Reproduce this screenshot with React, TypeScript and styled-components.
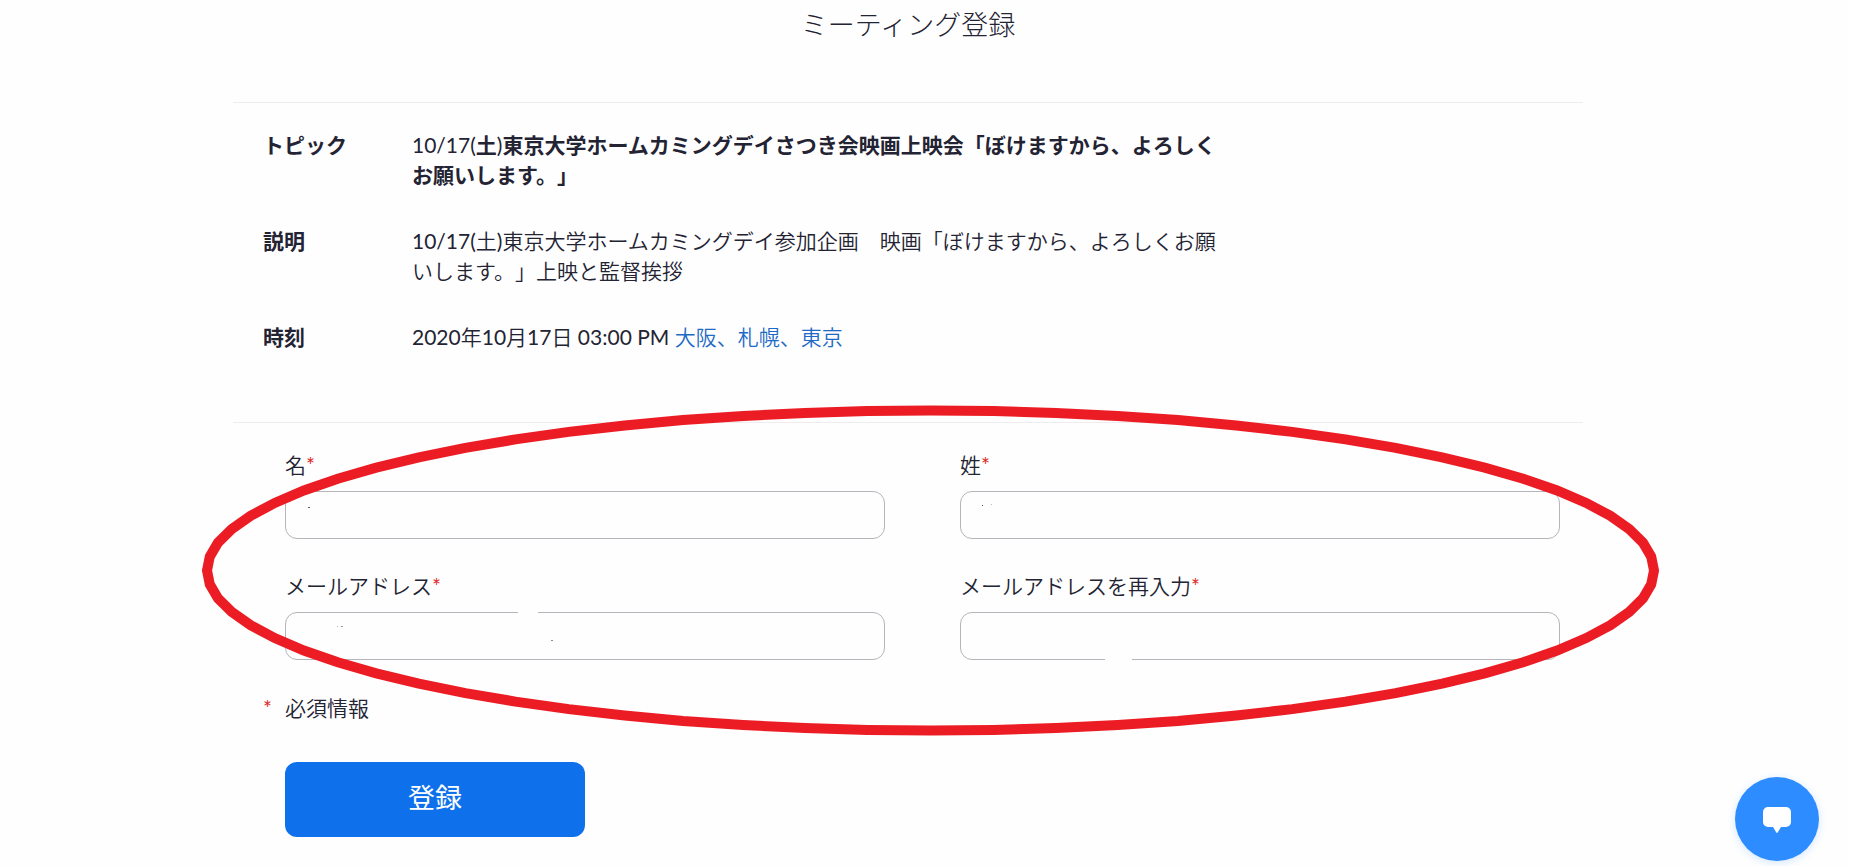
import React from "react";
import styled, { createGlobalStyle } from "styled-components";

const GlobalStyle = createGlobalStyle`
  *, *::before, *::after { box-sizing: border-box; }
  body {
    margin: 0;
    background: #fefefe;
    color: #232333;
    font-family: Lato, "Noto Sans CJK JP", sans-serif;
    font-size: 21px;
    line-height: 30px;
    text-spacing-trim: space-all;
  }
`;

const Page = styled.div`
  padding: 0 33px 24px 0;
`;

const Content = styled.main`
  max-width: 1350px;
  margin: 0 auto;
`;

const Title = styled.h1`
  margin: 0;
  padding: 5px 0 57px;
  font-size: 27px;
  line-height: 40px;
  font-weight: 300;
  text-align: center;
`;

const Details = styled.dl`
  display: flex;
  flex-direction: column;
  gap: 36px;
  margin: 0;
  padding: 27px 30px 70px;
  border-top: 1px solid #ededf0;
`;

const DetailRow = styled.div`
  display: grid;
  grid-template-columns: 149px minmax(0, 816px);
`;

const Term = styled.dt`
  font-weight: 700;
`;

const Description = styled.dd`
  margin: 0;
  font-weight: 350;
`;

const Regular = styled.span`
  font-weight: 400;
`;

const Strong = styled.strong`
  font-weight: 700;
`;

const ZoneLink = styled.a`
  color: #1f6ac6;
  text-decoration: none;
`;

const Form = styled.form`
  position: relative;
  padding: 27px 23px 0 52px;
  border-top: 1px solid #ededf0;
`;

const Fields = styled.div`
  display: grid;
  grid-template-columns: 1fr 1fr;
  gap: 32px 75px;
`;

const Field = styled.div`
  display: flex;
  flex-direction: column;
  gap: 11px;
`;

const Label = styled.label`
  font-weight: 350;
`;

const Star = styled.span`
  color: #e02828;
  font-weight: 400;
`;

const Input = styled.input`
  width: 100%;
  height: 48px;
  padding: 0 20px;
  border: 1px solid #b4b4ba;
  border-radius: 12px;
  background: #fefefe;
  color: inherit;
  font: inherit;
  outline: none;
`;

const Required = styled.p`
  display: grid;
  grid-template-columns: 22px 1fr;
  margin: 33px 0 39px -22px;
  font-weight: 350;
`;

const Submit = styled.button`
  display: block;
  width: 300px;
  height: 75px;
  padding: 0 0 4px;
  border: 0;
  border-radius: 12px;
  background: #0e71eb;
  color: #fff;
  font: inherit;
  font-size: 27px;
  cursor: pointer;
`;

const Marker = styled.svg`
  position: absolute;
  top: -23px;
  left: -33px;
  overflow: visible;
  pointer-events: none;
`;

const ChatButton = styled.button`
  position: fixed;
  right: 30px;
  bottom: 5px;
  display: flex;
  align-items: center;
  justify-content: center;
  width: 84px;
  height: 84px;
  padding: 0;
  border: 0;
  border-radius: 50%;
  background: #2d8cff;
  box-shadow: 0 2px 8px rgba(45, 140, 255, 0.2);
  cursor: pointer;
`;

const fields = [
  { id: "first-name", label: "名", type: "text" },
  { id: "last-name", label: "姓", type: "text" },
  { id: "email", label: "メールアドレス", type: "email" },
  { id: "email-confirm", label: "メールアドレスを再入力", type: "email" },
];

// The hand-drawn marker ring is a 72-sided polygon.
const ring = Array.from({ length: 72 }, (_, i) => {
  const angle = (i * Math.PI) / 36;
  return `${(730.5 + 723.5 * Math.cos(angle)).toFixed(1)},${(170.5 + 160 * Math.sin(angle)).toFixed(1)}`;
}).join(" ");

function MarkerRing() {
  return (
    <Marker width="1460" height="340" viewBox="0 0 1460 340" aria-hidden="true">
      <path d="M318 212.500h20M905 259.500h27" stroke="#fefefe" strokeWidth="3" />
      <g fill="#55555f">
        <rect x="108" y="107" width="2" height="1" />
        <rect x="782" y="105" width="1" height="1" />
        <rect x="791" y="104" width="1" height="1" opacity="0.4" />
        <rect x="137" y="226" width="1" height="1" opacity="0.4" />
        <rect x="141" y="226" width="2" height="1" opacity="0.6" />
        <rect x="351" y="240" width="2" height="1" opacity="0.7" />
      </g>
      <polygon points={ring} fill="none" stroke="#ec1c24" strokeWidth="10" />
    </Marker>
  );
}

export default function App() {
  return (
    <Page lang="ja">
      <GlobalStyle />
      <Content>
        <Title>ミーティング登録</Title>
        <Details>
          <DetailRow>
            <Term>トピック</Term>
            <Description>
              <Regular>10/17(</Regular>
              <Strong>土</Strong>
              <Regular>)</Regular>
              <Strong>東京大学ホームカミングデイさつき会映画上映会「ぼけますから、よろしくお願いします。」</Strong>
            </Description>
          </DetailRow>
          <DetailRow>
            <Term>説明</Term>
            <Description>
              <Regular>10/17(</Regular>土<Regular>)</Regular>
              東京大学ホームカミングデイ参加企画　映画「ぼけますから、よろしくお願いします。」上映と監督挨拶
            </Description>
          </DetailRow>
          <DetailRow>
            <Term>時刻</Term>
            <Description>
              <Regular>2020</Regular>年<Regular>10</Regular>月<Regular>17</Regular>日
              <Regular> 03:00 PM </Regular>
              <ZoneLink href="#timezone">大阪、札幌、東京</ZoneLink>
            </Description>
          </DetailRow>
        </Details>
        <Form onSubmit={(e) => e.preventDefault()}>
          <Fields>
            {fields.map((f) => (
              <Field key={f.id}>
                <Label htmlFor={f.id}>
                  {f.label}
                  <Star>*</Star>
                </Label>
                <Input id={f.id} type={f.type} />
              </Field>
            ))}
          </Fields>
          <Required>
            <Star>*</Star>
            <span>必須情報</span>
          </Required>
          <Submit type="submit">登録</Submit>
          <MarkerRing />
        </Form>
      </Content>
      <ChatButton type="button" aria-label="チャット">
        <svg width="28" height="28" viewBox="0 0 28 28" aria-hidden="true">
          <path d="M5 2h18a5 5 0 0 1 5 5v10a5 5 0 0 1-5 5h-5l-3 5q-1 2-2 0l-3-5H5a5 5 0 0 1-5-5V7a5 5 0 0 1 5-5z" fill="#fff" />
        </svg>
      </ChatButton>
    </Page>
  );
}
